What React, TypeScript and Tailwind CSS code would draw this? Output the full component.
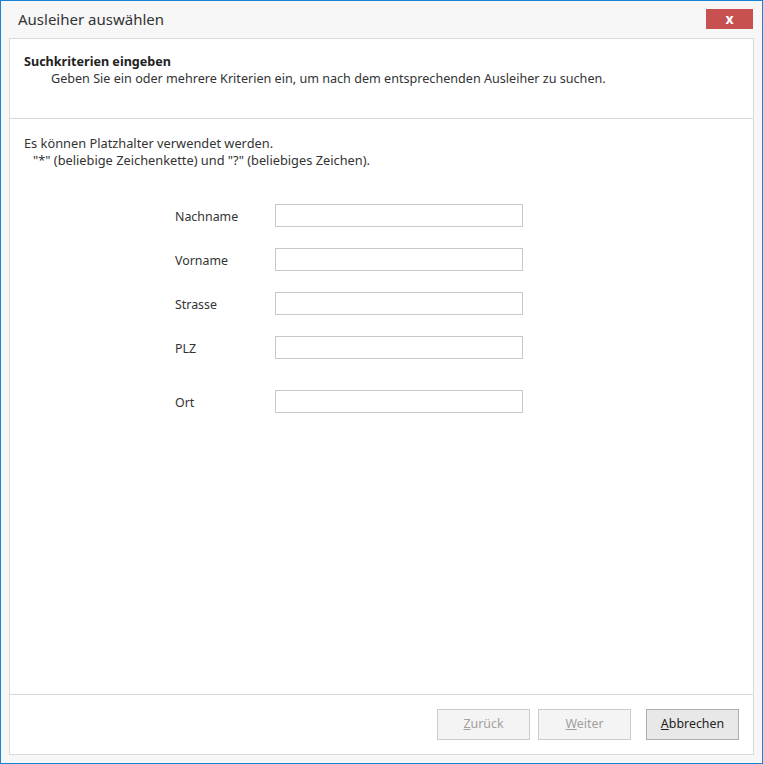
import React from "react";

const font = { fontFamily: '"Noto Sans", "Open Sans", sans-serif' };

function Row({ label, mt }: { label: string; mt: string }) {
  return (
    <div className={`flex items-center ${mt}`}>
      <div className="w-[100px] pt-[3px] text-[12.4px] text-[#333]">{label}</div>
      <div className="w-[248px] h-[23px] border border-[#c8c8c8] bg-white" />
    </div>
  );
}

export default function App() {
  return (
    <div
      className="w-[763px] h-[764px] border border-[#1883d7] bg-[#f7f7f7] flex flex-col"
      style={font}
    >
      <div className="h-[37px] flex items-start justify-between shrink-0">
        <div className="pl-[17px] pt-[8px] text-[15px] leading-[20px] text-[#333]">Ausleiher auswählen</div>
        <div className="mt-[8px] mr-[9px] w-[47px] h-[20px] bg-[#c75050] flex items-center justify-center text-white text-[14px] font-bold leading-none">
          x
        </div>
      </div>
      <div className="mx-[8px] mb-[8px] flex-1 border border-[#d9d9d9] bg-white flex flex-col">
        <div className="h-[80px] border-b border-[#d9d9d9] pl-[14px] pt-[14px] shrink-0">
          <div className="text-[12.6px] leading-[17px] font-bold text-[#222]">Suchkriterien eingeben</div>
          <div className="text-[12.6px] leading-[17px] text-[#333] pl-[27px]">
            Geben Sie ein oder mehrere Kriterien ein, um nach dem entsprechenden Ausleiher zu suchen.
          </div>
        </div>
        <div className="flex-1 pl-[14px] pt-[16px]">
          <div className="text-[12.8px] leading-[17px] text-[#333]">Es können Platzhalter verwendet werden.</div>
          <div className="text-[12.8px] leading-[17px] text-[#333] pl-[9px]">
            "*" (beliebige Zeichenkette) und "?" (beliebiges Zeichen).
          </div>
          <div className="pl-[151px] flex flex-col">
            <Row label="Nachname" mt="mt-[35px]" />
            <Row label="Vorname" mt="mt-[21px]" />
            <Row label="Strasse" mt="mt-[21px]" />
            <Row label="PLZ" mt="mt-[21px]" />
            <Row label="Ort" mt="mt-[31px]" />
          </div>
        </div>
        <div className="h-[60px] border-t border-[#d9d9d9] flex items-start justify-end pr-[14px] pt-[14px] shrink-0">
          <button className="w-[93px] h-[31px] border border-[#cccccc] bg-[#f4f4f4] text-[12.4px] text-[#a0a0a0]">
            <span className="underline">Z</span>urück
          </button>
          <button className="ml-[8px] w-[93px] h-[31px] border border-[#cccccc] bg-[#f4f4f4] text-[12.4px] text-[#a0a0a0]">
            <span className="underline">W</span>eiter
          </button>
          <button className="ml-[15px] w-[93px] h-[31px] border border-[#adadad] bg-[#e8e8e8] text-[12.4px] text-[#222]">
            <span className="underline">A</span>bbrechen
          </button>
        </div>
      </div>
    </div>
  );
}
